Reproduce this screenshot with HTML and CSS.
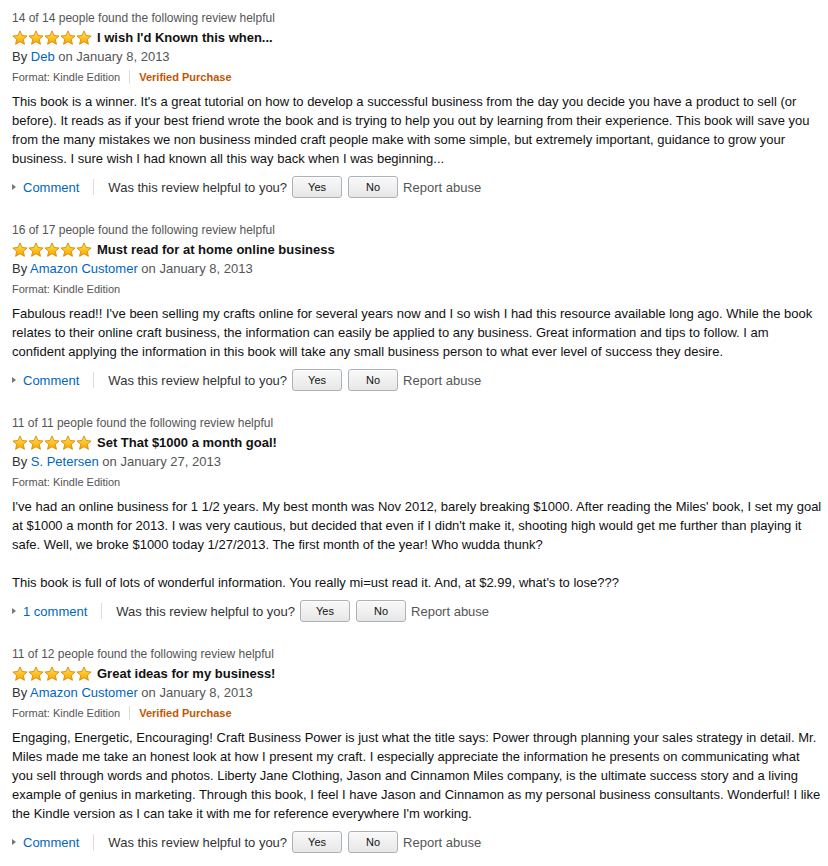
FILE: index.html
```html
<!DOCTYPE html>
<html>
<head>
<meta charset="utf-8">
<link rel="stylesheet" href="styles.css">
</head>
<body>
<svg width="0" height="0" class="defs">
  <defs>
    <linearGradient id="sg" x1="0" y1="0" x2="0" y2="1">
      <stop offset="0" stop-color="#ffe27a"/>
      <stop offset="0.45" stop-color="#ffc72a"/>
      <stop offset="1" stop-color="#f5a300"/>
    </linearGradient>
    <symbol id="star" viewBox="0 0 16 16">
      <path d="M8 0.9 L10.1 5.5 L15.1 6 L11.3 9.3 L12.4 14.3 L8 11.7 L3.6 14.3 L4.7 9.3 L0.9 6 L5.9 5.5 Z" fill="url(#sg)" stroke="#d98a00" stroke-width="0.9" stroke-linejoin="round"/>
    </symbol>
  </defs>
</svg>

<div class="reviews">

  <div class="review">
    <div class="helpful">14 of 14 people found the following review helpful</div>
    <div class="title-row">
      <span class="stars"><svg><use href="#star"/></svg><svg><use href="#star"/></svg><svg><use href="#star"/></svg><svg><use href="#star"/></svg><svg><use href="#star"/></svg></span>
      <span class="title">I wish I'd Known this when...</span>
    </div>
    <div class="byline">By <a class="link">Deb</a> <span class="date">on January 8, 2013</span></div>
    <div class="format">Format: Kindle Edition<span class="vsep"></span><span class="verified">Verified Purchase</span></div>
    <div class="text">This book is a winner. It's a great tutorial on how to develop a successful business from the day you decide you have a product to sell (or before). It reads as if your best friend wrote the book and is trying to help you out by learning from their experience. This book will save you from the many mistakes we non business minded craft people make with some simple, but extremely important, guidance to grow your business. I sure wish I had known all this way back when I was beginning...</div>
    <div class="actions">
      <span class="tri"></span><a class="link">Comment</a><span class="vsep tall"></span>
      <span class="ask">Was this review helpful to you?</span>
      <button class="btn">Yes</button><button class="btn">No</button>
      <span class="report">Report abuse</span>
    </div>
  </div>

  <div class="review">
    <div class="helpful">16 of 17 people found the following review helpful</div>
    <div class="title-row">
      <span class="stars"><svg><use href="#star"/></svg><svg><use href="#star"/></svg><svg><use href="#star"/></svg><svg><use href="#star"/></svg><svg><use href="#star"/></svg></span>
      <span class="title">Must read for at home online business</span>
    </div>
    <div class="byline">By <a class="link">Amazon Customer</a> <span class="date">on January 8, 2013</span></div>
    <div class="format">Format: Kindle Edition</div>
    <div class="text">Fabulous read!! I've been selling my crafts online for several years now and I so wish I had this resource available long ago. While the book relates to their online craft business, the information can easily be applied to any business. Great information and tips to follow. I am confident applying the information in this book will take any small business person to what ever level of success they desire.</div>
    <div class="actions">
      <span class="tri"></span><a class="link">Comment</a><span class="vsep tall"></span>
      <span class="ask">Was this review helpful to you?</span>
      <button class="btn">Yes</button><button class="btn">No</button>
      <span class="report">Report abuse</span>
    </div>
  </div>

  <div class="review">
    <div class="helpful">11 of 11 people found the following review helpful</div>
    <div class="title-row">
      <span class="stars"><svg><use href="#star"/></svg><svg><use href="#star"/></svg><svg><use href="#star"/></svg><svg><use href="#star"/></svg><svg><use href="#star"/></svg></span>
      <span class="title">Set That $1000 a month goal!</span>
    </div>
    <div class="byline">By <a class="link">S. Petersen</a> <span class="date">on January 27, 2013</span></div>
    <div class="format">Format: Kindle Edition</div>
    <div class="text">I've had an online business for 1 1/2 years. My best month was Nov 2012, barely breaking $1000. After reading the Miles' book, I set my goal at $1000 a month for 2013. I was very cautious, but decided that even if I didn't make it, shooting high would get me further than playing it safe. Well, we broke $1000 today 1/27/2013. The first month of the year! Who wudda thunk?<br><br>This book is full of lots of wonderful information. You really mi=ust read it. And, at $2.99, what's to lose???</div>
    <div class="actions">
      <span class="tri"></span><a class="link">1 comment</a><span class="vsep tall"></span>
      <span class="ask">Was this review helpful to you?</span>
      <button class="btn">Yes</button><button class="btn">No</button>
      <span class="report">Report abuse</span>
    </div>
  </div>

  <div class="review">
    <div class="helpful">11 of 12 people found the following review helpful</div>
    <div class="title-row">
      <span class="stars"><svg><use href="#star"/></svg><svg><use href="#star"/></svg><svg><use href="#star"/></svg><svg><use href="#star"/></svg><svg><use href="#star"/></svg></span>
      <span class="title">Great ideas for my business!</span>
    </div>
    <div class="byline">By <a class="link">Amazon Customer</a> <span class="date">on January 8, 2013</span></div>
    <div class="format">Format: Kindle Edition<span class="vsep"></span><span class="verified">Verified Purchase</span></div>
    <div class="text">Engaging, Energetic, Encouraging! Craft Business Power is just what the title says: Power through planning your sales strategy in detail. Mr. Miles made me take an honest look at how I present my craft. I especially appreciate the information he presents on communicating what you sell through words and photos. Liberty Jane Clothing, Jason and Cinnamon Miles company, is the ultimate success story and a living example of genius in marketing. Through this book, I feel I have Jason and Cinnamon as my personal business consultants. Wonderful! I like the Kindle version as I can take it with me for reference everywhere I'm working.</div>
    <div class="actions">
      <span class="tri"></span><a class="link">Comment</a><span class="vsep tall"></span>
      <span class="ask">Was this review helpful to you?</span>
      <button class="btn">Yes</button><button class="btn">No</button>
      <span class="report">Report abuse</span>
    </div>
  </div>

</div>
</body>
</html>
```

FILE: styles.css
```css
html, body {
  margin: 0;
  padding: 0;
  background: #fff;
}
body {
  font-family: "Liberation Sans", Arial, sans-serif;
  font-size: 13px;
  color: #111;
}
.defs {
  position: absolute;
  width: 0;
  height: 0;
}
.reviews {
  padding: 9px 0 0 12px;
  width: 810px;
}
.review {
  margin-bottom: 23px;
}
.helpful {
  font-size: 12px;
  line-height: 19px;
  color: #555;
}
.title-row {
  display: flex;
  align-items: center;
  height: 19px;
}
.stars {
  display: flex;
  gap: 0;
  margin-right: 5px;
}
.stars svg {
  width: 16px;
  height: 16px;
  display: block;
}
.title {
  font-weight: bold;
  font-size: 13px;
  color: #111;
}
.byline {
  line-height: 20px;
  color: #333;
}
.link {
  color: #0066c0;
  text-decoration: none;
}
.date {
  color: #555;
}
.format {
  font-size: 11px;
  line-height: 20px;
  color: #555;
  display: flex;
  align-items: center;
}
.vsep {
  display: inline-block;
  width: 1px;
  height: 14px;
  background: #ddd;
  margin: 0 9px 0 9px;
}
.verified {
  color: #c45500;
  font-weight: bold;
}
.text {
  margin-top: 5px;
  line-height: 19px;
  color: #111;
}
.actions {
  margin-top: 8px;
  display: flex;
  align-items: center;
  height: 22px;
  color: #333;
}
.tri {
  width: 0;
  height: 0;
  border-top: 3.5px solid transparent;
  border-bottom: 3.5px solid transparent;
  border-left: 4px solid #777;
  margin-right: 7px;
}
.vsep.tall {
  height: 16px;
  margin: 0 14px 0 14px;
}
.ask {
  color: #333;
  margin-right: 5px;
}
.btn {
  width: 50px;
  height: 22px;
  margin: 0 6px 0 0;
  padding: 0;
  font-family: "Liberation Sans", Arial, sans-serif;
  font-size: 11px;
  color: #111;
  border: 1px solid #adb1b8;
  border-radius: 3px;
  background: linear-gradient(to bottom, #f9f9f9, #e7e7e7);
  box-shadow: 0 1px 0 rgba(255,255,255,0.6) inset;
}
.report {
  color: #555;
  margin-left: -1px;
}
```
